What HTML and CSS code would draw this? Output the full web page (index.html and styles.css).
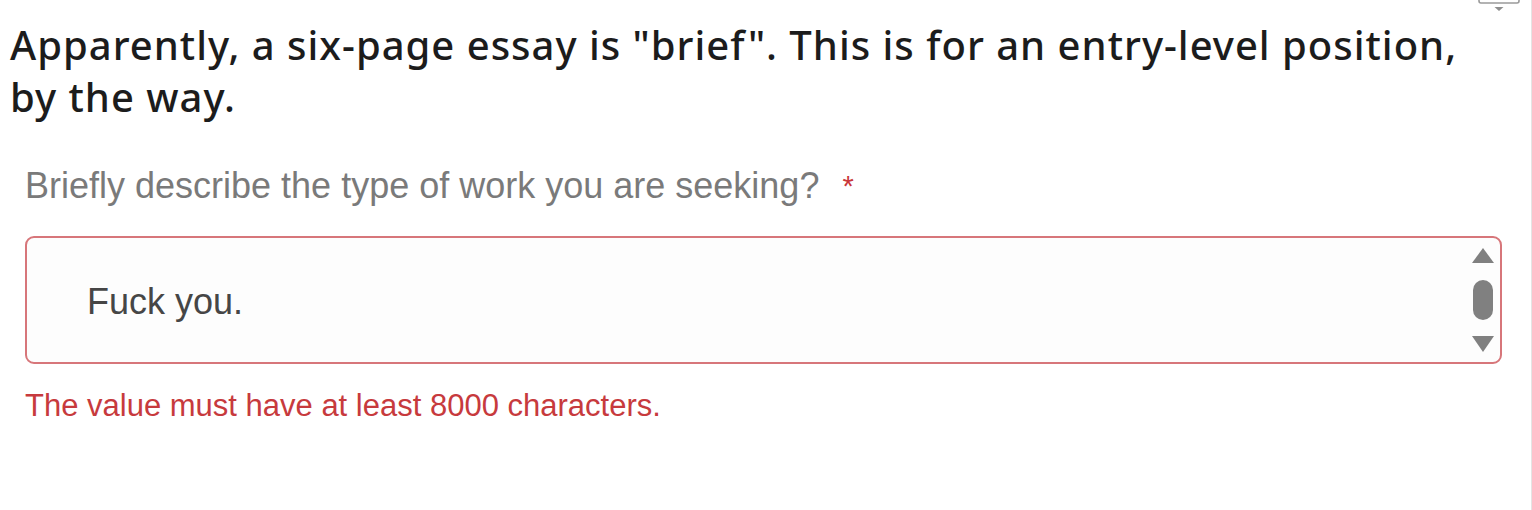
FILE: index.html
```html
<!DOCTYPE html>
<html lang="en">
<head>
  <meta charset="UTF-8" />
  <meta name="viewport" content="width=device-width, initial-scale=1.0" />
  <title>Brief essay</title>
  <link rel="stylesheet" href="styles.css">
</head>
<body>
  <div class="page">
    <div class="topbar">
      <svg class="menu-icon" width="42" height="12" viewBox="0 0 42 12">
        <path d="M1 0 V1 Q1 3 3 3 H39 Q41 3 41 1 V0" fill="none" stroke="#9a9a9a" stroke-width="1.6" />
        <path d="M16.5 7 H25.5 L21 11 Z" fill="#8e8e8e" />
      </svg>
    </div>

    <h1 class="post-title">Apparently, a six-page essay is "brief". This is for an entry-level position, by the way.</h1>

    <div class="field">
      <label class="field-label">Briefly describe the type of work you are seeking? <span class="required">*</span></label>
      <div class="answer-box">
        <div class="answer-text">Fuck you.</div>
        <svg class="scrollbar" width="22" height="105" viewBox="0 0 22 105">
          <path d="M11 0 L22 15 H0 Z" fill="#808080" />
          <rect x="1" y="32" width="20" height="40" rx="10" fill="#808080" />
          <path d="M0 88 H22 L11 104 Z" fill="#808080" />
        </svg>
      </div>
      <div class="error">The value must have at least 8000 characters.</div>
    </div>
  </div>
</body>
</html>
```

FILE: styles.css
```css
html, body {
  margin: 0;
  background: #fff;
}
.page {
  height: 510px;
  box-sizing: border-box;
  border-right: 1px solid #e4e4e4;
}
.topbar {
  display: flex;
  justify-content: flex-end;
  height: 12px;
  padding-right: 11px;
}
.menu-icon {
  display: block;
}
.post-title {
  max-width: 1470px;
  margin: 7px 0 0 10px;
  font-family: 'Noto Sans', sans-serif;
  font-weight: 500;
  font-size: 40px;
  line-height: 52px;
  letter-spacing: 1px;
  color: #1c1c1c;
}
.field {
  padding: 0 29px 0 25px;
  font-family: 'Liberation Sans', Arial, sans-serif;
}
.field-label {
  display: block;
  margin-top: 43px;
  font-size: 36px;
  line-height: 40px;
  color: #7a7a7a;
}
.required {
  display: inline-block;
  margin-left: 13px;
  font-size: 29px;
  vertical-align: top;
  color: #c9373a;
}
.answer-box {
  display: flex;
  margin-top: 30px;
  height: 128px;
  box-sizing: border-box;
  border: 2px solid #d7767a;
  border-radius: 9px;
  background: #fdfdfd;
}
.answer-text {
  flex: 1;
  padding: 44px 0 0 60px;
  font-size: 36px;
  line-height: 40px;
  color: #464646;
}
.scrollbar {
  margin: 10px 6px 0 0;
}
.error {
  margin-top: 24px;
  font-size: 31px;
  line-height: 36px;
  color: #c73a3d;
}
```
